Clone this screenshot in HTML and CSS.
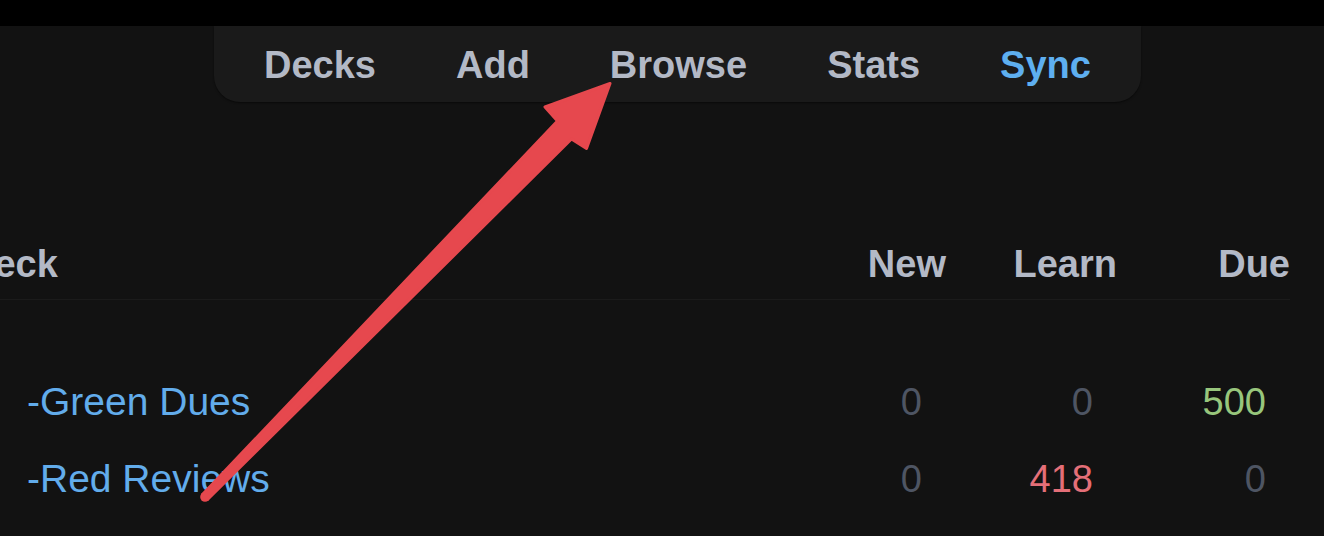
FILE: index.html
```html
<!DOCTYPE html>
<html lang="en">
<head>
<meta charset="utf-8">
<title>Decks</title>
<link rel="stylesheet" href="styles.css">
</head>
<body>
<div class="page">
  <div class="titlebar"></div>
  <nav class="topnav">
    <a class="nav-item">Decks</a>
    <a class="nav-item">Add</a>
    <a class="nav-item">Browse</a>
    <a class="nav-item">Stats</a>
    <a class="nav-item sync">Sync</a>
  </nav>
  <div class="decks">
    <div class="cell head name-head">Deck</div>
    <div class="cell head num-head">New</div>
    <div class="cell head num-head">Learn</div>
    <div class="cell head num-head">Due</div>

    <div class="cell name first">-Green Dues</div>
    <div class="cell num zero first">0</div>
    <div class="cell num zero first">0</div>
    <div class="cell num review first">500</div>

    <div class="cell name">-Red Reviews</div>
    <div class="cell num zero">0</div>
    <div class="cell num learn">418</div>
    <div class="cell num zero">0</div>
  </div>
  <svg class="arrow" width="1324" height="536" viewBox="0 0 1324 536">
    <polygon class="arrow-shape" points="207.5,499.5 571.5,139 586.5,148.5 610,83.5 545,107 557.5,121 202.5,494.5"/>
    <circle class="arrow-tail" cx="205" cy="497" r="4.8"/>
  </svg>
</div>
</body>
</html>
```

FILE: styles.css
```css
html, body {
  margin: 0;
  padding: 0;
  background: #121212;
  overflow: hidden;
}

.page {
  position: relative;
  width: 1324px;
  height: 536px;
  font-family: "Liberation Sans", Arial, Helvetica, sans-serif;
  background: #121212;
}

.titlebar {
  height: 26px;
  background: #000000;
}

.topnav {
  display: flex;
  gap: 80px;
  width: max-content;
  margin-left: 214px;
  padding: 20px 50px 18px;
  background: #1a1a1a;
  border-radius: 0 0 26px 26px;
  box-shadow: 0 1px 2px rgba(0, 0, 0, 0.5);
}

.nav-item {
  font-size: 38px;
  line-height: 38px;
  font-weight: bold;
  color: #b3b9c6;
  text-decoration: none;
}

.nav-item.sync {
  color: #5eaff0;
}

.decks {
  display: grid;
  grid-template-columns: 809px 170px 171px 173px;
  margin-left: -33px;
  margin-top: 143px;
}

.cell {
  font-size: 38px;
  line-height: 38px;
  white-space: nowrap;
}

.head {
  font-weight: bold;
  color: #b3b9c6;
  padding-bottom: 16px;
  border-bottom: 1px solid #1b1b1b;
}

.num-head {
  text-align: right;
}

.name {
  color: #62aceb;
  font-size: 39px;
  padding: 19.5px 0 19.5px 60px;
}

.num {
  text-align: right;
  padding: 19.5px 24px 19.5px 0;
}

.first {
  margin-top: 63px;
}

.zero {
  color: #4e5563;
}

.review {
  color: #98c67c;
}

.learn {
  color: #e46f78;
}

.arrow {
  position: absolute;
  left: 0;
  top: 0;
  pointer-events: none;
}

.arrow-shape {
  fill: #e6484e;
  stroke: #e6484e;
  stroke-width: 3;
  stroke-linejoin: round;
}

.arrow-tail {
  fill: #e6484e;
}
```
